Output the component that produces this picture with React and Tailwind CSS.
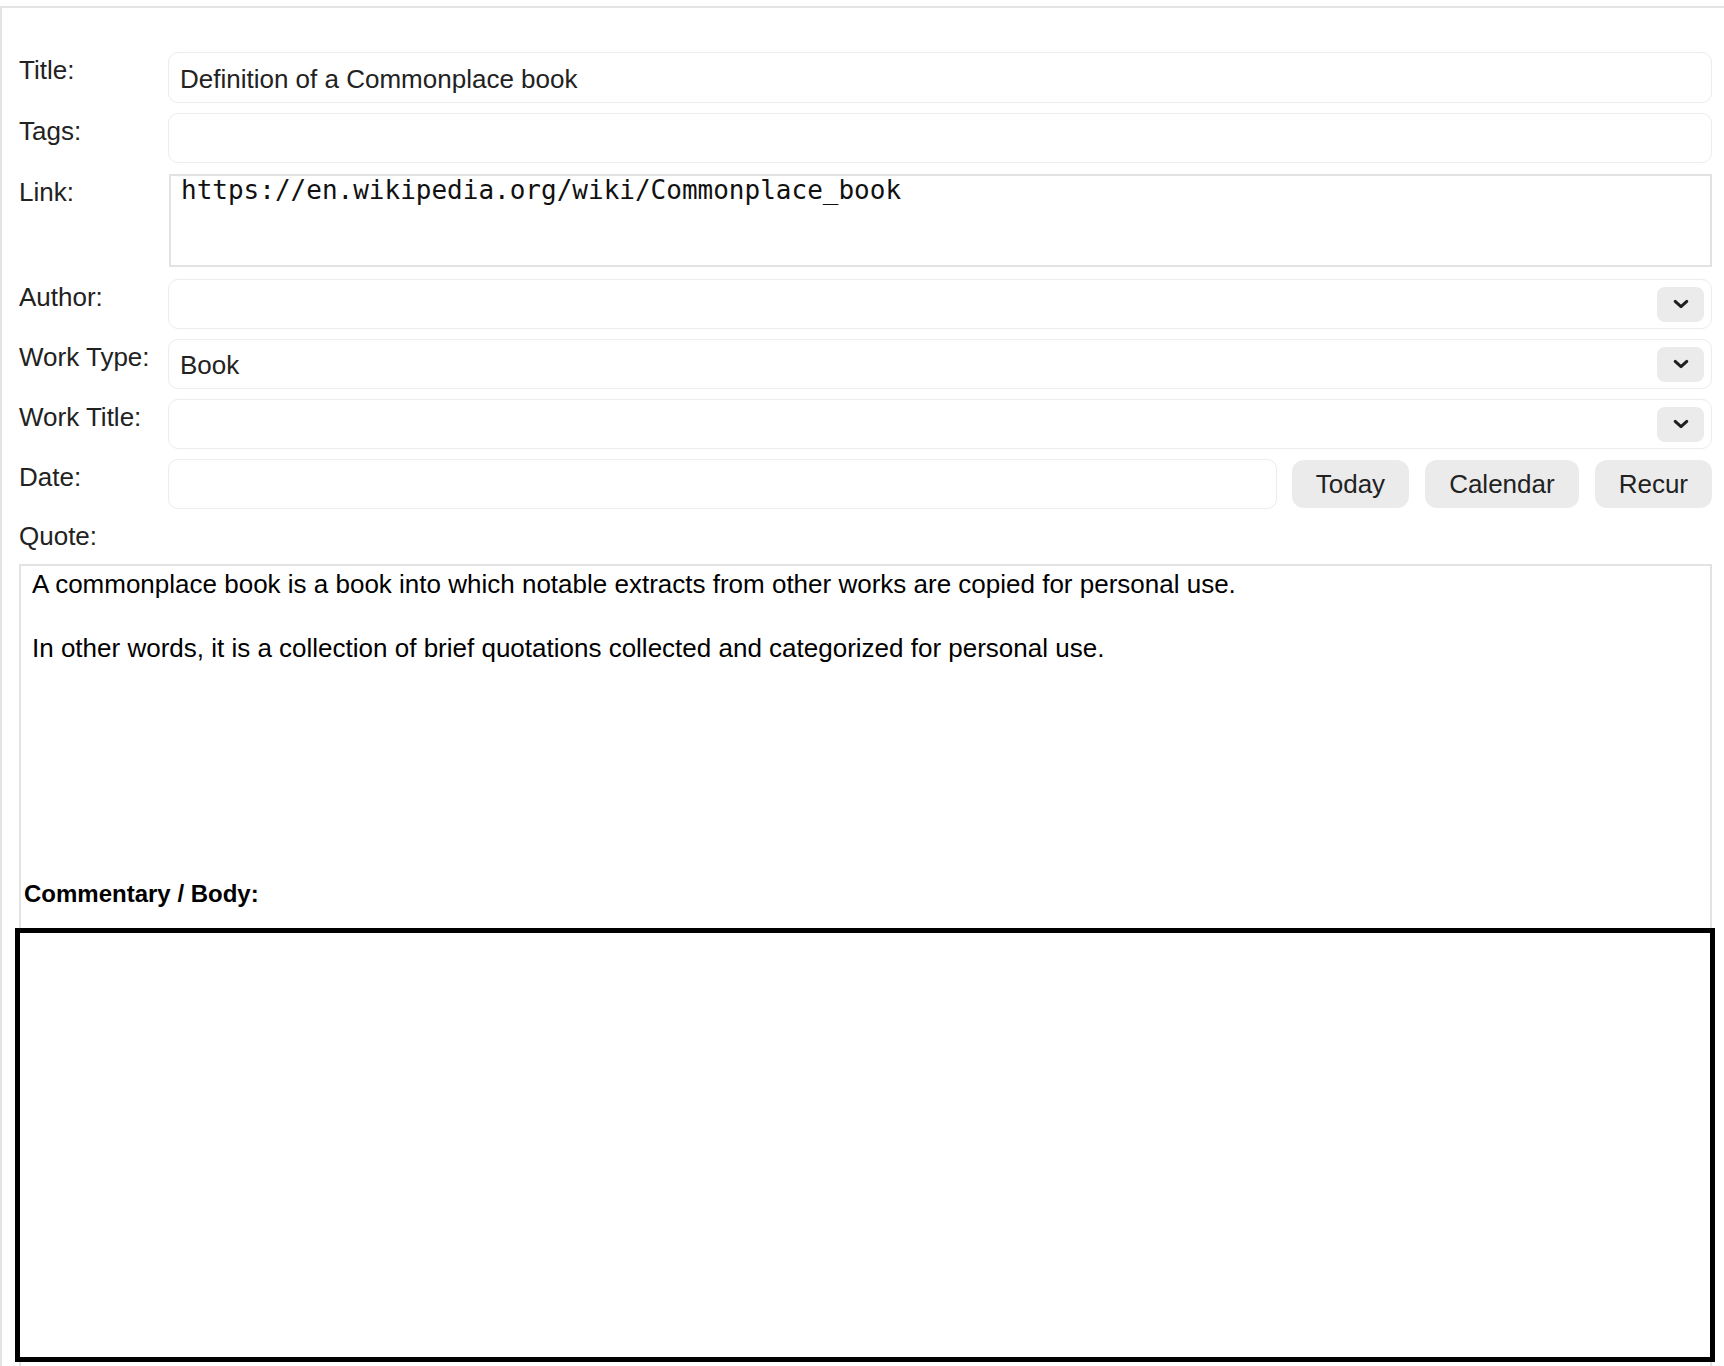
import React from 'react';

function Chevron() {
  return (
    <div className="mr-[7px] flex h-[35px] w-[47px] items-center justify-center rounded-[8px] bg-[#ebebeb]">
      <svg width="16" height="10" viewBox="0 0 16 10" fill="none">
        <path d="M2.2 2.4 L8 7.6 L13.8 2.4" stroke="#1f1f1f" strokeWidth="3" strokeLinecap="round" strokeLinejoin="round" />
      </svg>
    </div>
  );
}

function Row({ label, children, className = '' }) {
  return (
    <div className={`flex ${className}`}>
      <div className="w-[149px] shrink-0 pt-[4px] leading-[29px] text-[#222]">{label}</div>
      <div className="flex min-w-0 flex-1">{children}</div>
    </div>
  );
}

function Field({ value, select, h = 'h-[50px]' }) {
  return (
    <div className={`flex ${h} flex-1 items-center justify-between rounded-[10px] border-[1.5px] border-[#ececec] bg-white`}>
      <span className="pl-[11px] pt-[3px] leading-[29px] text-[#222]">{value}</span>
      {select && <Chevron />}
    </div>
  );
}

export default function App() {
  return (
    <div
      className="h-[1366px] overflow-hidden bg-white pt-[6px] text-[26px]"
      style={{ fontFamily: '"Liberation Sans", Arial, sans-serif' }}
    >
      <div className="h-full border-l-2 border-t-2 border-[#e4e4e4] pl-[17px] pr-[12px] pt-[44px]">
        <Row label="Title:" className="mb-[10px]">
          <Field value="Definition of a Commonplace book" h="h-[51px]" />
        </Row>
        <Row label="Tags:" className="mb-[11px]">
          <Field value="" />
        </Row>
        <Row label="Link:" className="mb-[12px]">
          <div
            className="ml-[1px] h-[93px] flex-1 border-2 border-[#e2e2e2] pl-[10px] leading-[29px] text-[#111]"
            style={{ fontFamily: '"DejaVu Sans Mono", "Liberation Mono", monospace' }}
          >
            https://en.wikipedia.org/wiki/Commonplace_book
          </div>
        </Row>
        <Row label="Author:" className="mb-[10px]">
          <Field value="" select />
        </Row>
        <Row label="Work Type:" className="mb-[10px]">
          <Field value="Book" select />
        </Row>
        <Row label="Work Title:" className="mb-[10px]">
          <Field value="" select />
        </Row>
        <Row label="Date:">
          <Field value="" />
          <div className="ml-[15px] flex items-center gap-[16px]">
            <button className="h-[48px] rounded-[12px] bg-[#ebebeb] px-6 text-[#222]">Today</button>
            <button className="h-[48px] rounded-[12px] bg-[#ebebeb] px-6 text-[#222]">Calendar</button>
            <button className="h-[48px] rounded-[12px] bg-[#ebebeb] px-6 text-[#222]">Recur</button>
          </div>
        </Row>

        <div className="mb-[13px] mt-[13px] leading-[29px] text-[#222]">Quote:</div>

        <div className="border-x-2 border-t-2 border-[#e3e3e3]">
          <div className="h-[314px] pl-[11px] pt-[2px] leading-[32px] text-black">
            <p>A commonplace book is a book into which notable extracts from other works are copied for personal use.</p>
            <p className="mt-[32px]">In other words, it is a collection of brief quotations collected and categorized for personal use.</p>
          </div>
          <div className="ml-[3px] text-[24px] font-bold leading-[28px] text-black">Commentary / Body:</div>
          <div className="-ml-[6px] -mr-[5px] mt-[20px] h-[434px] border-[5px] border-black bg-white"></div>
          <div className="h-[40px]"></div>
        </div>
      </div>
    </div>
  );
}
